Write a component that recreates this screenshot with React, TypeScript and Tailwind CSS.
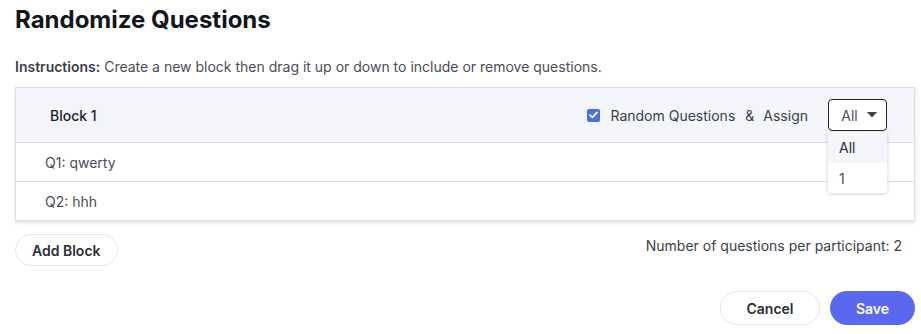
import { useState } from "react";

const questions = [
  { id: "Q1", text: "qwerty" },
  { id: "Q2", text: "hhh" },
];

function Caret() {
  return (
    <svg width="10" height="6" viewBox="0 0 10 6" className="ml-[9px]">
      <path d="M0 0 L10 0 L5 5.5 Z" fill="#3b3f4a" />
    </svg>
  );
}

function Checkbox() {
  return (
    <span className="flex h-[13px] w-[13px] items-center justify-center rounded-[2px] bg-[#4a6ee3]">
      <svg width="9" height="8" viewBox="0 0 9 8">
        <path d="M1 4.2 L3.4 6.4 L8 1.4" stroke="#fff" strokeWidth="1.8" fill="none" strokeLinecap="round" strokeLinejoin="round" />
      </svg>
    </span>
  );
}

export default function App() {
  const [assign] = useState("All");

  return (
    <div className="h-[334px] w-[921px] bg-white px-[15px] font-['Inter',sans-serif] text-[#2b2e36]">
      <h1 className="pt-[5px] text-[24px] font-bold leading-[30px] text-[#12151c]">
        Randomize Questions
      </h1>

      <p className="mt-[23px] text-[14px] leading-[17px] text-[#4a4d57]">
        <span className="font-semibold text-[#3b3e48]">Instructions:</span> Create a new block then drag it up or down to include or remove questions.
      </p>

      <div className="mt-[12px] w-[900px] border border-[#dcdee4] shadow-[0_2px_3px_rgba(0,0,0,0.12)]">
        <div className="flex h-[55px] items-center border-b border-[#dcdee4] bg-[#f4f5fa] pl-[34px] pr-[27px]">
          <span className="text-[14px] font-medium text-[#1b1d24]">Block 1</span>
          <div className="ml-auto flex items-center text-[14px] text-[#3b3e48]">
            <Checkbox />
            <span className="ml-[10px]">Random Questions</span>
            <span className="ml-[10px]">&amp;</span>
            <span className="ml-[9px]">Assign</span>
            <div className="relative ml-[20px]">
              <div className="flex h-[32px] w-[59px] items-center justify-center rounded-[4px] border border-[#1f2128] bg-white pl-[3px]">
                <span className="text-[14px] text-[#4a4d57]">{assign}</span>
                <Caret />
              </div>
              <div className="absolute left-0 top-[33px] z-10 w-[59px] overflow-hidden rounded-[3px] bg-white shadow-[0_1px_4px_rgba(0,0,0,0.18)]">
                <div className="flex h-[31px] items-center bg-[#f4f5fa] px-[11px] text-[14px] text-[#2b2e36]">All</div>
                <div className="flex h-[30px] items-center px-[11px] text-[14px] text-[#4a4d57]">1</div>
              </div>
            </div>
          </div>
        </div>
        {questions.map((q, i) => (
          <div
            key={q.id}
            className={
              i < questions.length - 1
                ? "flex h-[39px] items-center border-b border-[#dcdee4] pl-[29px] text-[14px] text-[#4a4d57]"
                : "flex h-[38px] items-center pl-[29px] text-[14px] text-[#4a4d57]"
            }
          >
            {q.id}: {q.text}
          </div>
        ))}
      </div>

      <div className="mt-[13px] flex w-[900px] items-start justify-between">
        <button className="h-[32px] rounded-full border border-[#e6e7eb] px-[16px] text-[14px] font-semibold text-[#2b2e36]">
          Add Block
        </button>
        <span className="mr-[13px] mt-[1px] text-[14px] text-[#3b3e48]">
          Number of questions per participant: 2
        </span>
      </div>

      <div className="mt-[25px] flex w-[900px] justify-end gap-[10px]">
        <button className="h-[34px] w-[100px] rounded-full border border-[#e6e7eb] text-[14px] font-semibold text-[#2b2e36]">
          Cancel
        </button>
        <button className="h-[34px] w-[85px] rounded-full bg-[#5a68f0] text-[14px] font-semibold text-white">
          Save
        </button>
      </div>
    </div>
  );
}
